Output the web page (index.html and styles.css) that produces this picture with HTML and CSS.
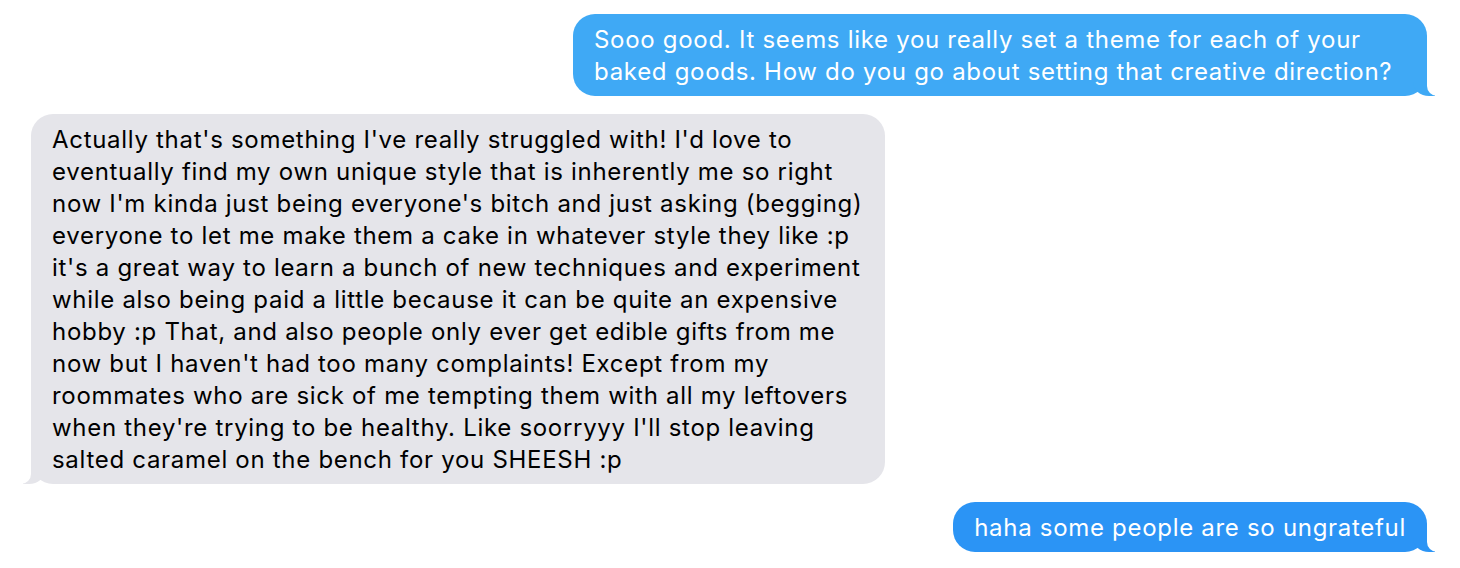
FILE: index.html
```html
<!DOCTYPE html>
<html lang="en">
<head>
<meta charset="utf-8">
<title>Messages</title>
<link rel="stylesheet" href="styles.css">
</head>
<body>
<div class="thread">
  <div class="bubble sent light wide">Sooo good. It seems like you really set a theme for each of your<br>baked goods. How do you go about setting that creative direction?</div>
  <div class="bubble received wide">Actually that's something I've really struggled with! I'd love to<br>eventually find my own unique style that is inherently me so right<br>now I'm kinda just being everyone's bitch and just asking (begging)<br>everyone to let me make them a cake in whatever style they like :p<br>it's a great way to learn a bunch of new techniques and experiment<br>while also being paid a little because it can be quite an expensive<br>hobby :p That, and also people only ever get edible gifts from me<br>now but I haven't had too many complaints! Except from my<br>roommates who are sick of me tempting them with all my leftovers<br>when they're trying to be healthy. Like soorryyy I'll stop leaving<br>salted caramel on the bench for you SHEESH :p</div>
  <div class="bubble sent dark">haha some people are so ungrateful</div>
</div>
</body>
</html>
```
FILE: styles.css
```css
html, body {
  margin: 0;
  background: #ffffff;
}
body {
  font-family: "Inter", "Liberation Sans", sans-serif;
}
.thread {
  display: flex;
  flex-direction: column;
  gap: 18px;
  padding: 14px 33px 0 31px;
}
.bubble {
  position: relative;
  box-sizing: border-box;
  padding: 10px 21px 8px;
  border-radius: 22px;
  font-size: 24px;
  letter-spacing: 0.7px;
  line-height: 32px;
  white-space: nowrap;
}
.wide {
  width: 854px;
}
.sent {
  align-self: flex-end;
  color: #ffffff;
}
.light { background: #3fa9f5; }
.dark { background: #2b94f5; }
.received {
  align-self: flex-start;
  background: #e5e5ea;
  color: #000000;
}
.bubble::before,
.bubble::after {
  content: "";
  position: absolute;
  bottom: 0;
  height: 22px;
}
.sent::before {
  right: -8px;
  width: 22px;
  background: inherit;
  border-bottom-left-radius: 16px 14px;
}
.sent::after {
  right: -26px;
  width: 26px;
  background: #ffffff;
  border-bottom-left-radius: 10px;
}
.received::before {
  left: -8px;
  width: 22px;
  background: #e5e5ea;
  border-bottom-right-radius: 16px 14px;
}
.received::after {
  left: -26px;
  width: 26px;
  background: #ffffff;
  border-bottom-right-radius: 10px;
}
```
